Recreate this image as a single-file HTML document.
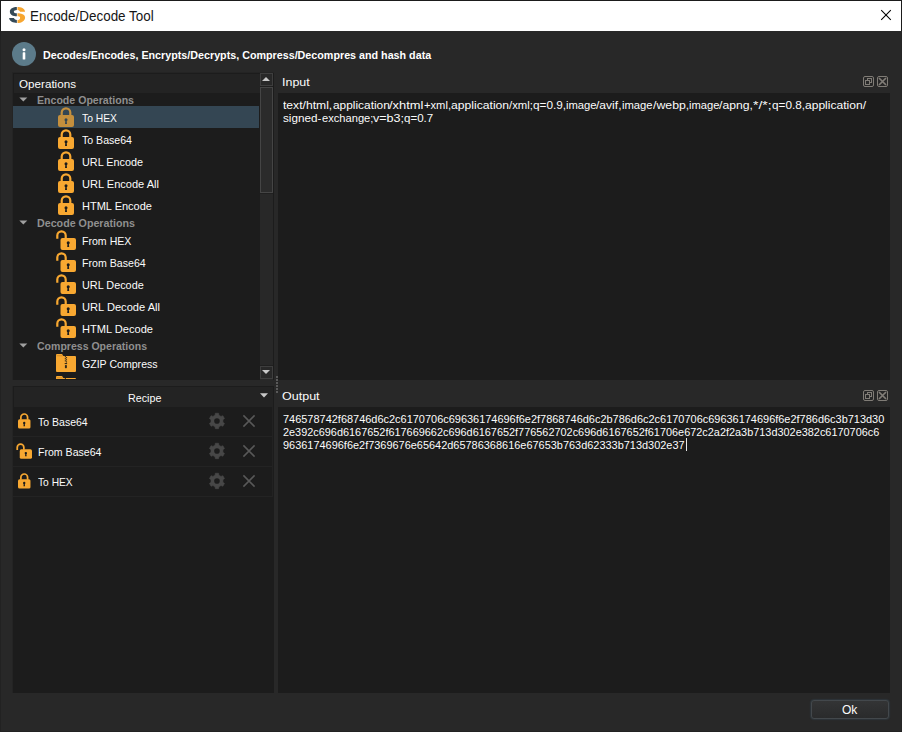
<!DOCTYPE html>
<html><head><meta charset="utf-8"><title>Encode/Decode Tool</title>
<style>
html,body{margin:0;padding:0;}
body{width:902px;height:732px;overflow:hidden;background:#282828;font-family:"Liberation Sans", sans-serif;position:relative;}
#win{position:absolute;left:0;top:0;width:902px;height:732px;background:#282828;overflow:hidden;}
.b{position:absolute;box-sizing:border-box;}
.ic{position:absolute;display:block;overflow:visible;}
.t{position:absolute;white-space:nowrap;line-height:1;transform-origin:0 0;display:block;}

</style></head><body><div id="win">
<div class="b" style="left:0;top:0;width:902px;height:1px;background:#1b1b1b"></div>
<div class="b" style="left:0;top:0;width:1px;height:732px;background:#222"></div>
<div class="b" style="left:0;top:0;width:1px;height:31px;background:#1b1b1b"></div>
<div class="b" style="left:901px;top:0;width:1px;height:732px;background:#252525"></div>
<div class="b" style="left:901px;top:0;width:1px;height:31px;background:#1b1b1b"></div>
<div class="b" style="left:0;top:731px;width:902px;height:1px;background:#222"></div>
<div class="b" style="left:1px;top:1px;width:900px;height:30px;background:#fff"></div>
<svg class="ic" style="left:9px;top:6px" width="17" height="17.2" viewBox="-0.100 -0.900 17.000 17.200"><defs><clipPath id="cl"><rect x="-1" y="-1" width="8.75" height="19"/></clipPath><clipPath id="cr"><rect x="8.4" y="-1" width="9" height="19"/></clipPath></defs><path d="M16 4.95 L11 4.95 C10.5 3.8 9.5 3.15 8.1 3.15 C6 3.15 4.75 3.8 4.75 4.8 C4.75 5.9 6.5 6.3 8.1 6.3 C12 6.3 16 7.5 16 10.5 C16 14 12.5 16.1 8.1 16.1 C4.2 16.1 0.4 14.6 0 11.2 L4.75 11.2 C5.3 12.5 6.5 13.15 8.1 13.15 C10 13.15 11 12.2 11 10.85 C11 9.7 9.8 9.4 8.1 9.4 C4 9.4 0.75 8 0.75 4.8 C0.75 1.8 4 0.2 8.1 0.2 C12 0.2 15.6 1.6 16 4.95 Z" fill="#354a58" clip-path="url(#cl)"/><path d="M16 4.95 L11 4.95 C10.5 3.8 9.5 3.15 8.1 3.15 C6 3.15 4.75 3.8 4.75 4.8 C4.75 5.9 6.5 6.3 8.1 6.3 C12 6.3 16 7.5 16 10.5 C16 14 12.5 16.1 8.1 16.1 C4.2 16.1 0.4 14.6 0 11.2 L4.75 11.2 C5.3 12.5 6.5 13.15 8.1 13.15 C10 13.15 11 12.2 11 10.85 C11 9.7 9.8 9.4 8.1 9.4 C4 9.4 0.75 8 0.75 4.8 C0.75 1.8 4 0.2 8.1 0.2 C12 0.2 15.6 1.6 16 4.95 Z" fill="#f7a630" clip-path="url(#cr)"/></svg>
<svg class="ic" style="left:881px;top:10px" width="10" height="10" viewBox="0 0 10 10"><path d="M0.2 0.2 L9.8 9.8 M9.8 0.2 L0.2 9.8" stroke="#000" stroke-width="1.05" fill="none"/></svg>
<svg class="ic" style="left:12px;top:42px" width="24" height="24" viewBox="0 0 24 24"><circle cx="12" cy="12" r="12" fill="#5c7b8a"/><circle cx="12" cy="7.7" r="1.5" fill="#fff"/><rect x="10.7" y="10.3" width="2.6" height="7.2" rx="0.6" fill="#fff"/></svg>
<div class="b" style="left:12px;top:72px;width:262px;height:308px;background:#242424"></div>
<div class="b" style="left:12px;top:386px;width:2px;height:307px;background:#242424"></div>
<div class="b" style="left:13px;top:73px;width:261px;height:307px;background:#1c1c1c"></div>
<div class="b" style="left:14px;top:74px;width:246px;height:19px;background:#232323"></div>
<div class="b" style="left:13px;top:106px;width:246px;height:22px;background:#344653"></div>
<div class="b" style="left:260px;top:73px;width:13px;height:307px;background:#282828"></div>
<div class="b" style="left:260px;top:73px;width:13px;height:13px;background:#282828;border:1px solid #3e3e3e"></div>
<div class="b" style="left:260px;top:86px;width:13px;height:1px;background:#202020"></div>
<div class="b" style="left:260px;top:193px;width:13px;height:1px;background:#202020"></div>
<div class="b" style="left:260px;top:365px;width:13px;height:1px;background:#202020"></div>
<svg class="ic" style="left:262px;top:77px" width="8" height="4" viewBox="0 0 8 4"><path d="M0 4 L4 0 L8 4 Z" fill="#c8c8c8"/></svg>
<div class="b" style="left:260px;top:87px;width:13px;height:106px;background:#2b2b2b;border:1px solid #454545"></div>
<div class="b" style="left:260px;top:366px;width:13px;height:13px;background:#282828;border:1px solid #3e3e3e"></div>
<svg class="ic" style="left:262px;top:370px" width="8" height="4" viewBox="0 0 8 4"><path d="M0 0 L4 4 L8 0 Z" fill="#c8c8c8"/></svg>
<svg class="ic" style="left:19px;top:97px" width="9" height="5" viewBox="-0.300 -0.400 9.000 5.000"><path d="M0 0 L4 4 L8 0 Z" fill="#a0a0a0"/></svg>
<svg class="ic" style="left:19px;top:220px" width="9" height="5" viewBox="-0.300 -0.400 9.000 5.000"><path d="M0 0 L4 4 L8 0 Z" fill="#a0a0a0"/></svg>
<svg class="ic" style="left:19px;top:343px" width="9" height="5" viewBox="-0.300 -0.400 9.000 5.000"><path d="M0 0 L4 4 L8 0 Z" fill="#a0a0a0"/></svg>
<svg class="ic" style="left:58px;top:107px" width="16.0" height="20.0" viewBox="0 0 16 20"><path d="M3.7 8.5 V5.6 A4.3 4.3 0 0 1 12.3 5.6 V8.5" fill="none" stroke="#c48f3d" stroke-width="2.2"/><rect x="0" y="8" width="16" height="12" rx="2" fill="#c48f3d"/><circle cx="8" cy="12.8" r="1.5" fill="#344653"/><path d="M7.4 13 L8.6 13 L9 16.9 L7 16.9 Z" fill="#344653"/></svg>
<svg class="ic" style="left:58px;top:129px" width="16.0" height="20.0" viewBox="0 0 16 20"><path d="M3.7 8.5 V5.6 A4.3 4.3 0 0 1 12.3 5.6 V8.5" fill="none" stroke="#f8a831" stroke-width="2.2"/><rect x="0" y="8" width="16" height="12" rx="2" fill="#f8a831"/><circle cx="8" cy="12.8" r="1.5" fill="#1c1c1c"/><path d="M7.4 13 L8.6 13 L9 16.9 L7 16.9 Z" fill="#1c1c1c"/></svg>
<svg class="ic" style="left:58px;top:151px" width="16.0" height="20.0" viewBox="0 0 16 20"><path d="M3.7 8.5 V5.6 A4.3 4.3 0 0 1 12.3 5.6 V8.5" fill="none" stroke="#f8a831" stroke-width="2.2"/><rect x="0" y="8" width="16" height="12" rx="2" fill="#f8a831"/><circle cx="8" cy="12.8" r="1.5" fill="#1c1c1c"/><path d="M7.4 13 L8.6 13 L9 16.9 L7 16.9 Z" fill="#1c1c1c"/></svg>
<svg class="ic" style="left:58px;top:173px" width="16.0" height="20.0" viewBox="0 0 16 20"><path d="M3.7 8.5 V5.6 A4.3 4.3 0 0 1 12.3 5.6 V8.5" fill="none" stroke="#f8a831" stroke-width="2.2"/><rect x="0" y="8" width="16" height="12" rx="2" fill="#f8a831"/><circle cx="8" cy="12.8" r="1.5" fill="#1c1c1c"/><path d="M7.4 13 L8.6 13 L9 16.9 L7 16.9 Z" fill="#1c1c1c"/></svg>
<svg class="ic" style="left:58px;top:195px" width="16.0" height="20.0" viewBox="0 0 16 20"><path d="M3.7 8.5 V5.6 A4.3 4.3 0 0 1 12.3 5.6 V8.5" fill="none" stroke="#f8a831" stroke-width="2.2"/><rect x="0" y="8" width="16" height="12" rx="2" fill="#f8a831"/><circle cx="8" cy="12.8" r="1.5" fill="#1c1c1c"/><path d="M7.4 13 L8.6 13 L9 16.9 L7 16.9 Z" fill="#1c1c1c"/></svg>
<svg class="ic" style="left:56px;top:230px" width="20.0" height="20.0" viewBox="0 0 20 20"><path d="M1.3 8.8 V5.6 A4.2 4.2 0 0 1 9.7 5.6 V8.5" fill="none" stroke="#f8a831" stroke-width="2.2"/><rect x="4.5" y="8" width="15.5" height="12" rx="2" fill="#f8a831"/><circle cx="12.2" cy="12.8" r="1.5" fill="#1c1c1c"/><path d="M11.6 13 L12.8 13 L13.2 16.9 L11.2 16.9 Z" fill="#1c1c1c"/></svg>
<svg class="ic" style="left:56px;top:252px" width="20.0" height="20.0" viewBox="0 0 20 20"><path d="M1.3 8.8 V5.6 A4.2 4.2 0 0 1 9.7 5.6 V8.5" fill="none" stroke="#f8a831" stroke-width="2.2"/><rect x="4.5" y="8" width="15.5" height="12" rx="2" fill="#f8a831"/><circle cx="12.2" cy="12.8" r="1.5" fill="#1c1c1c"/><path d="M11.6 13 L12.8 13 L13.2 16.9 L11.2 16.9 Z" fill="#1c1c1c"/></svg>
<svg class="ic" style="left:56px;top:274px" width="20.0" height="20.0" viewBox="0 0 20 20"><path d="M1.3 8.8 V5.6 A4.2 4.2 0 0 1 9.7 5.6 V8.5" fill="none" stroke="#f8a831" stroke-width="2.2"/><rect x="4.5" y="8" width="15.5" height="12" rx="2" fill="#f8a831"/><circle cx="12.2" cy="12.8" r="1.5" fill="#1c1c1c"/><path d="M11.6 13 L12.8 13 L13.2 16.9 L11.2 16.9 Z" fill="#1c1c1c"/></svg>
<svg class="ic" style="left:56px;top:296px" width="20.0" height="20.0" viewBox="0 0 20 20"><path d="M1.3 8.8 V5.6 A4.2 4.2 0 0 1 9.7 5.6 V8.5" fill="none" stroke="#f8a831" stroke-width="2.2"/><rect x="4.5" y="8" width="15.5" height="12" rx="2" fill="#f8a831"/><circle cx="12.2" cy="12.8" r="1.5" fill="#1c1c1c"/><path d="M11.6 13 L12.8 13 L13.2 16.9 L11.2 16.9 Z" fill="#1c1c1c"/></svg>
<svg class="ic" style="left:56px;top:318px" width="20.0" height="20.0" viewBox="0 0 20 20"><path d="M1.3 8.8 V5.6 A4.2 4.2 0 0 1 9.7 5.6 V8.5" fill="none" stroke="#f8a831" stroke-width="2.2"/><rect x="4.5" y="8" width="15.5" height="12" rx="2" fill="#f8a831"/><circle cx="12.2" cy="12.8" r="1.5" fill="#1c1c1c"/><path d="M11.6 13 L12.8 13 L13.2 16.9 L11.2 16.9 Z" fill="#1c1c1c"/></svg>
<svg class="ic" style="left:56px;top:354px;overflow:hidden" width="20" height="18" viewBox="0 0 20 18"><path d="M0 1 Q0 0 1 0 H5.6 Q6.3 0 6.6 0.7 L7.3 2 H19 Q20 2 20 3 V17 Q20 18 19 18 H1 Q0 18 0 17 Z" fill="#f8a831"/><path d="M0.6 1.75 H6.8" stroke="#b87a22" stroke-width="0.6"/><rect x="8.8" y="2.10" width="1.15" height="1.1" fill="#2a2418"/><rect x="9.9" y="3.15" width="1.15" height="1.1" fill="#2a2418"/><rect x="8.8" y="4.20" width="1.15" height="1.1" fill="#2a2418"/><rect x="9.9" y="5.25" width="1.15" height="1.1" fill="#2a2418"/><rect x="8.8" y="6.30" width="1.15" height="1.1" fill="#2a2418"/><rect x="9.9" y="7.35" width="1.15" height="1.1" fill="#2a2418"/><rect x="8.7" y="9.1" width="2.4" height="1" fill="#241e14"/><rect x="8.9" y="11.1" width="2" height="3.1" rx="0.7" fill="#33291a"/></svg>
<svg class="ic" style="left:56px;top:376px;overflow:hidden" width="20" height="3" viewBox="0 0 20 3"><path d="M0 1 Q0 0 1 0 H5.6 Q6.3 0 6.6 0.7 L7.3 2 H19 Q20 2 20 3 V17 Q20 18 19 18 H1 Q0 18 0 17 Z" fill="#f8a831"/><path d="M0.6 1.75 H6.8" stroke="#b87a22" stroke-width="0.6"/><rect x="8.8" y="2.10" width="1.15" height="1.1" fill="#2a2418"/><rect x="9.9" y="3.15" width="1.15" height="1.1" fill="#2a2418"/><rect x="8.8" y="4.20" width="1.15" height="1.1" fill="#2a2418"/><rect x="9.9" y="5.25" width="1.15" height="1.1" fill="#2a2418"/><rect x="8.8" y="6.30" width="1.15" height="1.1" fill="#2a2418"/><rect x="9.9" y="7.35" width="1.15" height="1.1" fill="#2a2418"/><rect x="8.7" y="9.1" width="2.4" height="1" fill="#241e14"/><rect x="8.9" y="11.1" width="2" height="3.1" rx="0.7" fill="#33291a"/></svg>
<div class="b" style="left:278px;top:93px;width:612px;height:287px;background:#1c1c1c"></div>
<div class="b" style="left:278px;top:407px;width:612px;height:286px;background:#1c1c1c"></div>
<svg class="ic" style="left:863px;top:76px" width="11" height="11" viewBox="0 0 11 11"><rect x="0.5" y="0.5" width="10" height="10" rx="1.5" fill="none" stroke="#807c76" stroke-width="1"/><rect x="4.5" y="2.5" width="4" height="4" fill="none" stroke="#807c76" stroke-width="1"/><rect x="2.5" y="4.5" width="4" height="4" fill="#282828" stroke="#807c76" stroke-width="1"/></svg>
<svg class="ic" style="left:877px;top:76px" width="11" height="11" viewBox="0 0 11 11"><rect x="0.5" y="0.5" width="10" height="10" rx="1.5" fill="none" stroke="#807c76" stroke-width="1"/><path d="M2 2 L9 9 M9 2 L2 9" stroke="#827e78" stroke-width="1.7"/></svg>
<svg class="ic" style="left:863px;top:390px" width="11" height="11" viewBox="0 0 11 11"><rect x="0.5" y="0.5" width="10" height="10" rx="1.5" fill="none" stroke="#807c76" stroke-width="1"/><rect x="4.5" y="2.5" width="4" height="4" fill="none" stroke="#807c76" stroke-width="1"/><rect x="2.5" y="4.5" width="4" height="4" fill="#282828" stroke="#807c76" stroke-width="1"/></svg>
<svg class="ic" style="left:877px;top:390px" width="11" height="11" viewBox="0 0 11 11"><rect x="0.5" y="0.5" width="10" height="10" rx="1.5" fill="none" stroke="#807c76" stroke-width="1"/><path d="M2 2 L9 9 M9 2 L2 9" stroke="#827e78" stroke-width="1.7"/></svg>
<div class="b" style="left:276px;top:376px;width:2px;height:2px;background:#5a5a5a"></div>
<div class="b" style="left:276px;top:379px;width:2px;height:2px;background:#5a5a5a"></div>
<div class="b" style="left:276px;top:382px;width:2px;height:2px;background:#5a5a5a"></div>
<div class="b" style="left:276px;top:385px;width:2px;height:2px;background:#5a5a5a"></div>
<div class="b" style="left:276px;top:388px;width:2px;height:2px;background:#5a5a5a"></div>
<div class="b" style="left:276px;top:391px;width:2px;height:2px;background:#5a5a5a"></div>
<div class="b" style="left:13px;top:386px;width:261px;height:307px;background:#1c1c1c"></div>
<div class="b" style="left:14px;top:387px;width:259px;height:20px;background:#232323"></div>
<svg class="ic" style="left:260px;top:393px" width="8" height="5" viewBox="0 0 8 5"><path d="M0 0.3 L4 4.6 L8 0.3 Z" fill="#c8c8c8"/></svg>
<div class="b" style="left:13px;top:436px;width:260px;height:1px;background:#232323"></div>
<div class="b" style="left:272px;top:407px;width:1px;height:30px;background:#222"></div>
<svg class="ic" style="left:208px;top:412px" width="18" height="18" viewBox="-0.470 -0.470 18.000 18.000"><path d="M6.56 2.72 L6.86 0.77 L10.14 0.77 L10.44 2.72 L12.54 3.93 L14.37 3.21 L16.01 6.06 L14.48 7.28 L14.48 9.72 L16.01 10.94 L14.37 13.79 L12.54 13.07 L10.44 14.28 L10.14 16.23 L6.86 16.23 L6.56 14.28 L4.46 13.07 L2.63 13.79 L0.99 10.94 L2.52 9.72 L2.52 7.28 L0.99 6.06 L2.63 3.21 L4.46 3.93 Z" fill="#474747" stroke="#474747" stroke-width="0.6" stroke-linejoin="round"/><circle cx="8.5" cy="8.5" r="2.8" fill="#1c1c1c"/></svg>
<svg class="ic" style="left:243px;top:415px" width="12" height="12" viewBox="0 0 12 12"><path d="M0.4 0.4 L11.6 11.6 M11.6 0.4 L0.4 11.6" stroke="#585858" stroke-width="1.5" fill="none"/></svg>
<div class="b" style="left:13px;top:466px;width:260px;height:1px;background:#232323"></div>
<div class="b" style="left:272px;top:437px;width:1px;height:30px;background:#222"></div>
<svg class="ic" style="left:208px;top:442px" width="18" height="18" viewBox="-0.470 -0.470 18.000 18.000"><path d="M6.56 2.72 L6.86 0.77 L10.14 0.77 L10.44 2.72 L12.54 3.93 L14.37 3.21 L16.01 6.06 L14.48 7.28 L14.48 9.72 L16.01 10.94 L14.37 13.79 L12.54 13.07 L10.44 14.28 L10.14 16.23 L6.86 16.23 L6.56 14.28 L4.46 13.07 L2.63 13.79 L0.99 10.94 L2.52 9.72 L2.52 7.28 L0.99 6.06 L2.63 3.21 L4.46 3.93 Z" fill="#474747" stroke="#474747" stroke-width="0.6" stroke-linejoin="round"/><circle cx="8.5" cy="8.5" r="2.8" fill="#1c1c1c"/></svg>
<svg class="ic" style="left:243px;top:445px" width="12" height="12" viewBox="0 0 12 12"><path d="M0.4 0.4 L11.6 11.6 M11.6 0.4 L0.4 11.6" stroke="#585858" stroke-width="1.5" fill="none"/></svg>
<div class="b" style="left:13px;top:496px;width:260px;height:1px;background:#232323"></div>
<div class="b" style="left:272px;top:467px;width:1px;height:30px;background:#222"></div>
<svg class="ic" style="left:208px;top:472px" width="18" height="18" viewBox="-0.470 -0.470 18.000 18.000"><path d="M6.56 2.72 L6.86 0.77 L10.14 0.77 L10.44 2.72 L12.54 3.93 L14.37 3.21 L16.01 6.06 L14.48 7.28 L14.48 9.72 L16.01 10.94 L14.37 13.79 L12.54 13.07 L10.44 14.28 L10.14 16.23 L6.86 16.23 L6.56 14.28 L4.46 13.07 L2.63 13.79 L0.99 10.94 L2.52 9.72 L2.52 7.28 L0.99 6.06 L2.63 3.21 L4.46 3.93 Z" fill="#474747" stroke="#474747" stroke-width="0.6" stroke-linejoin="round"/><circle cx="8.5" cy="8.5" r="2.8" fill="#1c1c1c"/></svg>
<svg class="ic" style="left:243px;top:475px" width="12" height="12" viewBox="0 0 12 12"><path d="M0.4 0.4 L11.6 11.6 M11.6 0.4 L0.4 11.6" stroke="#585858" stroke-width="1.5" fill="none"/></svg>
<svg class="ic" style="left:18px;top:413px" width="12.48" height="15.600000000000001" viewBox="0 0 16 20"><path d="M3.7 8.5 V5.6 A4.3 4.3 0 0 1 12.3 5.6 V8.5" fill="none" stroke="#f8a831" stroke-width="2.2"/><rect x="0" y="8" width="16" height="12" rx="2" fill="#f8a831"/><circle cx="8" cy="12.8" r="1.5" fill="#1c1c1c"/><path d="M7.4 13 L8.6 13 L9 16.9 L7 16.9 Z" fill="#1c1c1c"/></svg>
<svg class="ic" style="left:16px;top:443px" width="16.8" height="16.8" viewBox="-0.253 0.000 21.266 21.266"><path d="M1.3 8.8 V5.6 A4.2 4.2 0 0 1 9.7 5.6 V8.5" fill="none" stroke="#f8a831" stroke-width="2.2"/><rect x="4.5" y="8" width="15.5" height="12" rx="2" fill="#f8a831"/><circle cx="12.2" cy="12.8" r="1.5" fill="#1c1c1c"/><path d="M11.6 13 L12.8 13 L13.2 16.9 L11.2 16.9 Z" fill="#1c1c1c"/></svg>
<svg class="ic" style="left:18px;top:473px" width="12.48" height="15.600000000000001" viewBox="0 0 16 20"><path d="M3.7 8.5 V5.6 A4.3 4.3 0 0 1 12.3 5.6 V8.5" fill="none" stroke="#f8a831" stroke-width="2.2"/><rect x="0" y="8" width="16" height="12" rx="2" fill="#f8a831"/><circle cx="8" cy="12.8" r="1.5" fill="#1c1c1c"/><path d="M7.4 13 L8.6 13 L9 16.9 L7 16.9 Z" fill="#1c1c1c"/></svg>
<div class="b" style="left:686px;top:438px;width:1px;height:13px;background:#e8e8e8"></div>
<div class="b" style="left:811px;top:700px;width:78px;height:19px;border:1px solid #43484c;border-radius:3px;background:linear-gradient(#333435,#2a2b2c);box-shadow:0 0 1.5px #3f6178"></div>
<div class="t" id="title" style="left:30.3px;top:9.15px;font-size:14px;font-weight:400;color:#161616;transform:scaleX(0.9593)">Encode/Decode Tool</div>
<div class="t" id="desc" style="left:42.8px;top:49.69px;font-size:11px;font-weight:700;color:#fff;transform:scaleX(0.9754)">Decodes/Encodes, Encrypts/Decrypts, Compress/Decompres and hash data</div>
<div class="t" id="opsh" style="left:18.6px;top:79.27px;font-size:11.5px;font-weight:400;color:#fbfbfb;transform:scaleX(1.0131)">Operations</div>
<div class="t" id="g1" style="left:37px;top:95.49px;font-size:11px;font-weight:600;color:#8f8f8f;transform:scaleX(0.9617)">Encode Operations</div>
<div class="t" id="g2" style="left:37px;top:218.49px;font-size:11px;font-weight:600;color:#8f8f8f;transform:scaleX(0.9716)">Decode Operations</div>
<div class="t" id="g3" style="left:37px;top:341.49px;font-size:11px;font-weight:600;color:#8f8f8f;transform:scaleX(0.9572)">Compress Operations</div>
<div class="t" id="t1" style="left:82px;top:112.69px;font-size:11px;font-weight:400;color:#fbfbfb;transform:scaleX(0.9384)">To HEX</div>
<div class="t" id="t2" style="left:82px;top:134.69px;font-size:11px;font-weight:400;color:#fbfbfb;transform:scaleX(0.9618)">To Base64</div>
<div class="t" id="t3" style="left:82px;top:156.69px;font-size:11px;font-weight:400;color:#fbfbfb;transform:scaleX(0.9844)">URL Encode</div>
<div class="t" id="t4" style="left:82px;top:178.69px;font-size:11px;font-weight:400;color:#fbfbfb;transform:scaleX(1.0047)">URL Encode All</div>
<div class="t" id="t5" style="left:82px;top:200.69px;font-size:11px;font-weight:400;color:#fbfbfb;transform:scaleX(1.0013)">HTML Encode</div>
<div class="t" id="t6" style="left:82px;top:235.69px;font-size:11px;font-weight:400;color:#fbfbfb;transform:scaleX(0.9621)">From HEX</div>
<div class="t" id="t7" style="left:82px;top:257.69px;font-size:11px;font-weight:400;color:#fbfbfb;transform:scaleX(0.9647)">From Base64</div>
<div class="t" id="t8" style="left:82px;top:279.69px;font-size:11px;font-weight:400;color:#fbfbfb;transform:scaleX(0.9860)">URL Decode</div>
<div class="t" id="t9" style="left:82px;top:301.69px;font-size:11px;font-weight:400;color:#fbfbfb;transform:scaleX(1.0097)">URL Decode All</div>
<div class="t" id="t10" style="left:82px;top:323.69px;font-size:11px;font-weight:400;color:#fbfbfb;transform:scaleX(1.0069)">HTML Decode</div>
<div class="t" id="t11" style="left:82px;top:358.69px;font-size:11px;font-weight:400;color:#fbfbfb;transform:scaleX(0.9611)">GZIP Compress</div>
<div class="t" id="inh" style="left:282.4px;top:77.27px;font-size:11.5px;font-weight:400;color:#fbfbfb;transform:scaleX(1.0830)">Input</div>
<div class="t" id="in1_0" style="left:283.3px;top:99.69px;font-size:11px;font-weight:400;color:#fbfbfb;transform:scaleX(1.1025)">text/html,</div>
<div class="t" id="in1_1" style="left:332.5px;top:99.69px;font-size:11px;font-weight:400;color:#fbfbfb;transform:scaleX(1.0800)">application</div>
<div class="t" id="in1_2" style="left:389.3px;top:99.69px;font-size:11px;font-weight:400;color:#fbfbfb;transform:scaleX(1.1723)">/xhtml</div>
<div class="t" id="in1_3" style="left:423.7px;top:99.69px;font-size:11px;font-weight:400;color:#fbfbfb;transform:scaleX(1.0153)">+xml,</div>
<div class="t" id="in1_4" style="left:450.7px;top:99.69px;font-size:11px;font-weight:400;color:#fbfbfb;transform:scaleX(1.1047)">application</div>
<div class="t" id="in1_5" style="left:508.8px;top:99.69px;font-size:11px;font-weight:400;color:#fbfbfb;transform:scaleX(1.0286)">/xml;</div>
<div class="t" id="in1_6" style="left:532.7px;top:99.69px;font-size:11px;font-weight:400;color:#fbfbfb;transform:scaleX(1.0715)">q=0.9,</div>
<div class="t" id="in1_7" style="left:565.8px;top:99.69px;font-size:11px;font-weight:400;color:#fbfbfb;transform:scaleX(1.0211)">image</div>
<div class="t" id="in1_8" style="left:596.4px;top:99.69px;font-size:11px;font-weight:400;color:#fbfbfb;transform:scaleX(1.0975)">/avif,</div>
<div class="t" id="in1_9" style="left:621.9px;top:99.69px;font-size:11px;font-weight:400;color:#fbfbfb;transform:scaleX(1.0211)">image</div>
<div class="t" id="in1_10" style="left:652.5px;top:99.69px;font-size:11px;font-weight:400;color:#fbfbfb;transform:scaleX(1.1196)">/webp,</div>
<div class="t" id="in1_11" style="left:688.8px;top:99.69px;font-size:11px;font-weight:400;color:#fbfbfb;transform:scaleX(1.0144)">image</div>
<div class="t" id="in1_12" style="left:719.2px;top:99.69px;font-size:11px;font-weight:400;color:#fbfbfb;transform:scaleX(1.1081)">/apng,</div>
<div class="t" id="in1_13" style="left:753.1px;top:99.69px;font-size:11px;font-weight:400;color:#fbfbfb;transform:scaleX(1.2596)">*/*;</div>
<div class="t" id="in1_14" style="left:771.6px;top:99.69px;font-size:11px;font-weight:400;color:#fbfbfb;transform:scaleX(1.0683)">q=0.8,</div>
<div class="t" id="in1_15" style="left:804.6px;top:99.69px;font-size:11px;font-weight:400;color:#fbfbfb;transform:scaleX(1.0960)">application/</div>
<div class="t" id="in2_0" style="left:283.3px;top:112.69px;font-size:11px;font-weight:400;color:#fbfbfb;transform:scaleX(1.0644)">signed-</div>
<div class="t" id="in2_1" style="left:321.7px;top:112.69px;font-size:11px;font-weight:400;color:#fbfbfb;transform:scaleX(1.0125)">exchange;</div>
<div class="t" id="in2_2" style="left:373.1px;top:112.69px;font-size:11px;font-weight:400;color:#fbfbfb;transform:scaleX(1.1426)">v=b3;</div>
<div class="t" id="in2_3" style="left:404.2px;top:112.69px;font-size:11px;font-weight:400;color:#fbfbfb;transform:scaleX(1.0487)">q=0.7</div>
<div class="t" id="rech" style="left:128.4px;top:393.27px;font-size:11.5px;font-weight:400;color:#fbfbfb;transform:scaleX(0.9326)">Recipe</div>
<div class="t" id="r1" style="left:38.3px;top:416.69px;font-size:11px;font-weight:400;color:#fbfbfb;transform:scaleX(0.9561)">To Base64</div>
<div class="t" id="r2" style="left:38.3px;top:446.69px;font-size:11px;font-weight:400;color:#fbfbfb;transform:scaleX(0.9617)">From Base64</div>
<div class="t" id="r3" style="left:38.3px;top:476.69px;font-size:11px;font-weight:400;color:#fbfbfb;transform:scaleX(0.9304)">To HEX</div>
<div class="t" id="outh" style="left:282.4px;top:391.27px;font-size:11.5px;font-weight:400;color:#fbfbfb;transform:scaleX(1.0889)">Output</div>
<div class="t" id="o1" style="left:283.4px;top:413.69px;font-size:11px;font-weight:400;color:#fbfbfb;transform:scaleX(0.9959)">746578742f68746d6c2c6170706c69636174696f6e2f7868746d6c2b786d6c2c6170706c69636174696f6e2f786d6c3b713d30</div>
<div class="t" id="o2" style="left:283.4px;top:426.69px;font-size:11px;font-weight:400;color:#fbfbfb;transform:scaleX(0.9906)">2e392c696d6167652f617669662c696d6167652f776562702c696d6167652f61706e672c2a2f2a3b713d302e382c6170706c6</div>
<div class="t" id="o3" style="left:283.4px;top:439.69px;font-size:11px;font-weight:400;color:#fbfbfb;transform:scaleX(0.9946)">9636174696f6e2f7369676e65642d65786368616e67653b763d62333b713d302e37</div>
<div class="t" id="ok" style="left:842px;top:703.84px;font-size:12px;font-weight:400;color:#fbfbfb;transform:scaleX(1.0037)">Ok</div>
</div></body></html>
